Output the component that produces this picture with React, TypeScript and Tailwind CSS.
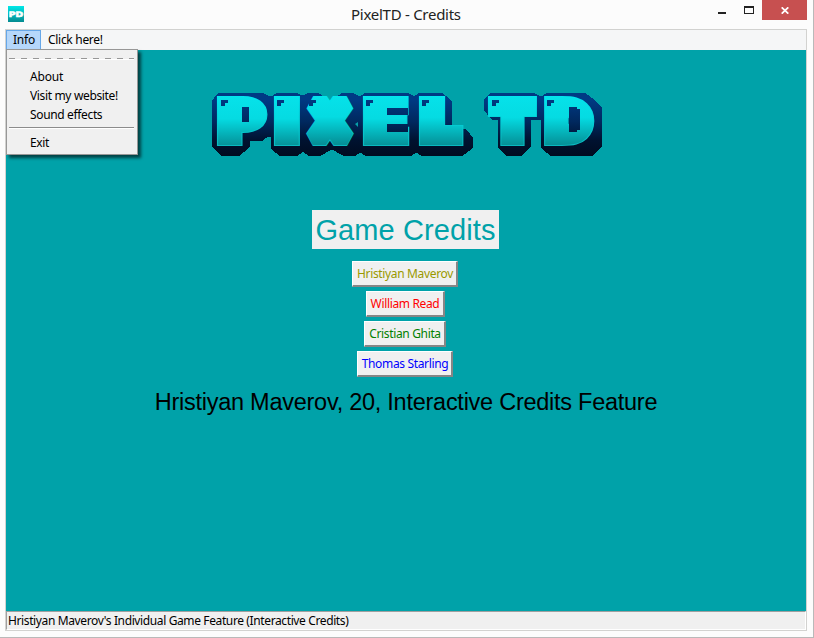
import React from "react";

const face = [
  { ch: "P", x: 217, w: 50, min: 188, max: 1401, size: 51, stroke: 12 },
  { ch: "I", x: 274, w: 26, min: 188, max: 573, size: 51, stroke: 12 },
  { ch: "X", x: 305, w: 50, min: 51, max: 1530, size: 46, stroke: 16 },
  { ch: "E", x: 363, w: 48, min: 188, max: 1305, size: 51, stroke: 12 },
  { ch: "L", x: 419, w: 45, min: 188, max: 1270, size: 49, stroke: 14 },
  { ch: "T", x: 488, w: 49, min: 10, max: 1386, size: 49, stroke: 14 },
  { ch: "D", x: 544, w: 50, min: 188, max: 1585, size: 49, stroke: 14 },
];

function Logo() {
  return (
    <svg width="392" height="65" viewBox="211 92 392 65" className="block font-['DejaVu_Sans'] font-bold" role="img" aria-label="PIXEL TD">
      <defs>
        <linearGradient id="navy" gradientUnits="userSpaceOnUse" x1="0" y1="93" x2="0" y2="156">
          <stop offset="0.1" stopColor="#003a84" />
          <stop offset="0.45" stopColor="#00295f" />
          <stop offset="0.75" stopColor="#001230" />
          <stop offset="1" stopColor="#000c20" />
        </linearGradient>
        <linearGradient id="cyan" gradientUnits="userSpaceOnUse" x1="0" y1="-44" x2="0" y2="6">
          <stop offset="0" stopColor="#06e2ea" />
          <stop offset="0.45" stopColor="#05dbe2" />
          <stop offset="1" stopColor="#058f96" />
        </linearGradient>
        <linearGradient id="rim" gradientUnits="userSpaceOnUse" x1="0" y1="-44" x2="0" y2="6">
          <stop offset="0" stopColor="#00e8f0" />
          <stop offset="1" stopColor="#08b9bf" />
        </linearGradient>
      </defs>
      <g fill="url(#navy)" stroke="url(#navy)" strokeWidth="8" strokeLinejoin="round" shapeRendering="crispEdges">
        <path d="M220 97H262L268 100L273 100L278 97H296L303 100L309 97H317L324 101L331 106L338 101L343 97H352L360 101L366 97H407L415 101L420 97H441L448 103V133H464L469 139V146L461 152H423L416 148L410 152H367L360 148L354 152H345L332 145L319 152H310L303 147L296 152H281L275 147V133H266L261 137H246V145L238 152H223L216 145V102Z" />
        <path d="M492 97H533L541 101L548 97H584L592 103L598 109V145L591 152H552L545 146V116H527V145L520 152H508L502 146V116H494L488 109V101Z" />
      </g>
      <path d="M355 124l3-2v5z" fill="#08a0a8" />
      {face.map((f) => {
        const left = (f.min / 2048) * f.size;
        const ink = ((f.max - f.min) / 2048) * f.size;
        const sx = f.w / (ink + f.stroke);
        return (
          <g key={f.ch} transform={`translate(${f.x} ${146.2 - f.stroke / 2}) scale(${sx} 1) translate(${f.stroke / 2 - left} 0)`} strokeLinejoin="miter" strokeMiterlimit={1.5}>
            <text x="0" y="0" fontSize={f.size} fill="url(#cyan)" stroke="url(#rim)" strokeWidth={f.stroke}>{f.ch}</text>
            <text x="0" y="0" fontSize={f.size} fill="url(#cyan)" stroke="url(#cyan)" strokeWidth={f.stroke - 2} aria-hidden="true">{f.ch}</text>
          </g>
        );
      })}
      <g fill="url(#navy)" shapeRendering="crispEdges">
        <rect x="242" y="107" width="7" height="15" />
        <rect x="387" y="108" width="21" height="7" />
        <rect x="387" y="124" width="21" height="8" />
        <rect x="569" y="107" width="8" height="25" />
        <rect x="577" y="109" width="3" height="21" />
        {[221, 277, 309, 366, 422, 492, 547].map((x) => (
          <path key={x} d={`M${x} 100h7v3h-3v3h-4z`} />
        ))}
      </g>
    </svg>
  );
}

const ui = "font-['Noto_Sans',sans-serif] whitespace-nowrap";

function CreditButton({ name, className }: { name: string; className: string }) {
  return (
    <button className={`${ui} flex h-[26px] items-center justify-center border-t border-l border-r-2 border-b-2 border-t-white border-l-white border-r-[#868686] border-b-[#868686] bg-[#f0f0f0] pl-px text-[12px] leading-none tracking-[-0.35px] ${className}`}>
      {name}
    </button>
  );
}

export default function App() {
  return (
    <div className="flex h-[638px] w-[814px] flex-col border-r border-b border-[#b9b9b9] bg-[#fcfcfc] text-black">
      <header className="flex h-[29px] items-start">
        <svg width="16" height="16" viewBox="0 0 16 16" className="mt-[6px] ml-2">
          <defs>
            <linearGradient id="app" x1="0" y1="0" x2="0" y2="1">
              <stop stopColor="#00e8e8" />
              <stop offset="1" stopColor="#058b91" />
            </linearGradient>
          </defs>
          <rect width="16" height="16" fill="url(#app)" />
          <text x="0.8" y="10.7" fontSize="7.5" textLength="14.4" lengthAdjust="spacingAndGlyphs" fill="white" stroke="white" strokeWidth="0.6" className="font-['DejaVu_Sans'] font-bold">PD</text>
        </svg>
        <h1 className={`${ui} ml-[327px] w-[120px] pt-1 text-[15px] leading-5 tracking-[-0.27px] text-[#222]`}>PixelTD - Credits</h1>
        <div className="ml-auto flex items-start">
          <span className="mt-3 mr-[18px] h-[2px] w-2 bg-[#222]" />
          <span className="mt-[6px] mr-2 h-2 w-[10px] border border-t-2 border-[#222]" />
          <span className="mr-[6px] flex h-5 w-[45px] items-center justify-center bg-[#c75050]">
            <svg width="8" height="7" viewBox="0 0 8 7" className="mt-px">
              <path d="M.7.3l6.6 6.4M7.3.3L.7 6.7" stroke="white" strokeWidth="1.7" />
            </svg>
          </span>
        </div>
      </header>
      <main className="ml-[5px] flex h-[602px] w-[802px] flex-col border border-[#d2d2d0]">
        <nav className={`${ui} relative flex h-5 shrink-0 bg-[#f5f6f7] text-[12px]`}>
          <div className="flex h-5 w-[35px] items-center justify-center border border-[#66a7e8] bg-[#b5d7fa] pl-px tracking-[-0.2px]">Info</div>
          <div className="ml-[7px] flex h-5 items-center tracking-[-0.3px]">Click here!</div>
          <div className="absolute top-[19px] left-0 z-10 h-[106px] w-[132px] border border-[#979797] bg-[#f0f0f0] shadow-[3px_3px_3px_rgba(0,0,0,0.6)]">
            <div className="mt-2 ml-[2px] h-[2px] w-[125px] border-b border-white bg-[repeating-linear-gradient(90deg,#979797_0_6px,#f0f0f0_6px_12px)]" />
            <div className="mt-[7px] flex flex-col pl-[23px] tracking-[-0.35px]">
              <span className="h-[19px] leading-[19px] tracking-[-0.2px]">About</span>
              <span className="h-[19px] leading-[19px]">Visit my website!</span>
              <span className="h-[19px] leading-[19px]">Sound effects</span>
            </div>
            <div className="mt-[3px] ml-[2px] h-[2px] w-[125px] border-t border-b border-t-[#8c8c8c] border-b-white" />
            <span className="mt-[4px] ml-[23px] block leading-[19px] tracking-[-0.35px]">Exit</span>
          </div>
        </nav>
        <section className="flex h-[561px] shrink-0 flex-col items-center bg-[#00a2a9]">
          <div className="mt-[42px] ml-[2px]"><Logo /></div>
          <h2 className="mt-[53px] mr-[1px] flex h-[39px] w-[187px] items-center justify-center bg-[#f0f0f0] pt-[2px] font-['Liberation_Sans',sans-serif] text-[29px] leading-[37px] tracking-[0.1px] whitespace-nowrap text-[#00a2a9]">Game Credits</h2>
          <div className="mt-3 mr-[2px] flex flex-col items-center gap-1">
            <CreditButton name="Hristiyan Maverov" className="w-[106px] text-[#999900]" />
            <CreditButton name="William Read" className="w-[79px] text-[#ff0000]" />
            <CreditButton name="Cristian Ghita" className="w-[82px] text-[#008000]" />
            <CreditButton name="Thomas Starling" className="w-[96px] text-[#0000ff]" />
          </div>
          <p className="mt-[11px] font-['Liberation_Sans',sans-serif] text-[23.5px] leading-7 tracking-[-0.26px] whitespace-nowrap">Hristiyan Maverov, 20, Interactive Credits Feature</p>
        </section>
        <footer className={`${ui} h-[19px] border-t border-r border-b border-l border-t-[#a0a0a0] border-l-[#a0a0a0] border-r-white border-b-white bg-[#f0f0f0] pl-px text-[12px] leading-[18px] tracking-[-0.38px]`}>
          Hristiyan Maverov's Individual Game Feature (Interactive Credits)
        </footer>
      </main>
    </div>
  );
}
